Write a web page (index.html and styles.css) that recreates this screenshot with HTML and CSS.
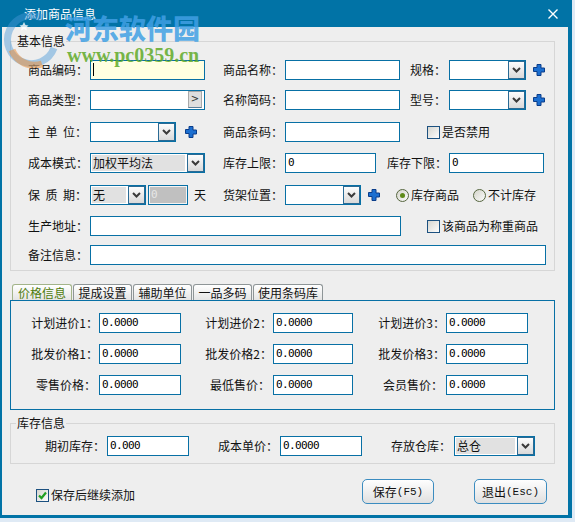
FILE: index.html
```html
<!DOCTYPE html>
<html lang="zh-CN">
<head>
<meta charset="utf-8">
<title>添加商品信息</title>
<link rel="stylesheet" href="styles.css">
</head>
<body>
<div class="win">
  <div class="titlebar">
    <span class="title">添加商品信息</span>
    <svg class="close" width="10" height="10" viewBox="0 0 10 10"><path d="M0.5 0.5L9.5 9.5M9.5 0.5L0.5 9.5" stroke="#fff" stroke-width="1.4"/></svg>
  </div>
  <div class="client">
    <div class="group basic">
      <span class="legend">基本信息</span>
      <div class="row">
        <span class="lbl">商品编码：</span>
        <span class="inp focus w115"><span class="caret"></span></span>
        <span class="lbl ml18">商品名称：</span>
        <span class="inp w115"></span>
        <span class="lbl lbl-s ml10">规格：</span>
        <span class="combo w77"><span class="cval"></span><span class="dd"><svg width="9" height="6" viewBox="0 0 9 6"><path d="M1 1l3.5 3.5L8 1" fill="none" stroke="#3a3a3a" stroke-width="2"/></svg></span></span>
        <svg class="plus ml7" width="12" height="12" viewBox="0 0 12 12"><path d="M4 .5h4v3.5h3.5v4H8v3.5H4V7.5H.5v-4H4z" fill="#1c6fd0" stroke="#0a3d8a"/></svg>
      </div>
      <div class="row mt10">
        <span class="lbl">商品类型：</span>
        <span class="inp w115 withbtn"><span class="mbtn">&gt;</span></span>
        <span class="lbl ml18">名称简码：</span>
        <span class="inp w115"></span>
        <span class="lbl lbl-s ml10">型号：</span>
        <span class="combo w77"><span class="cval"></span><span class="dd"><svg width="9" height="6" viewBox="0 0 9 6"><path d="M1 1l3.5 3.5L8 1" fill="none" stroke="#3a3a3a" stroke-width="2"/></svg></span></span>
        <svg class="plus ml7" width="12" height="12" viewBox="0 0 12 12"><path d="M4 .5h4v3.5h3.5v4H8v3.5H4V7.5H.5v-4H4z" fill="#1c6fd0" stroke="#0a3d8a"/></svg>
      </div>
      <div class="row mt12">
        <span class="lbl"><span class="sp">主单</span>位：</span>
        <span class="combo w86"><span class="cval"></span><span class="dd"><svg width="9" height="6" viewBox="0 0 9 6"><path d="M1 1l3.5 3.5L8 1" fill="none" stroke="#3a3a3a" stroke-width="2"/></svg></span></span>
        <svg class="plus ml9" width="12" height="12" viewBox="0 0 12 12"><path d="M4 .5h4v3.5h3.5v4H8v3.5H4V7.5H.5v-4H4z" fill="#1c6fd0" stroke="#0a3d8a"/></svg>
        <span class="lbl ml26">商品条码：</span>
        <span class="inp w115"></span>
        <span class="cb ml27"></span><span class="cbtxt">是否禁用</span>
      </div>
      <div class="row mt11">
        <span class="lbl">成本模式：</span>
        <span class="combo grey w115"><span class="cval">加权平均法</span><span class="dd"><svg width="9" height="6" viewBox="0 0 9 6"><path d="M1 1l3.5 3.5L8 1" fill="none" stroke="#3a3a3a" stroke-width="2"/></svg></span></span>
        <span class="lbl ml18">库存上限：</span>
        <span class="inp w91">0</span>
        <span class="lbl ml11">库存下限：</span>
        <span class="inp w95">0</span>
      </div>
      <div class="row mt12">
        <span class="lbl"><span class="sp">保质</span>期：</span>
        <span class="combo grey w56"><span class="cval">无</span><span class="dd"><svg width="9" height="6" viewBox="0 0 9 6"><path d="M1 1l3.5 3.5L8 1" fill="none" stroke="#3a3a3a" stroke-width="2"/></svg></span></span>
        <span class="inp dis w40 ml2">0</span>
        <span class="day">天</span>
        <span class="lbl ml17">货架位置：</span>
        <span class="combo w76"><span class="cval"></span><span class="dd"><svg width="9" height="6" viewBox="0 0 9 6"><path d="M1 1l3.5 3.5L8 1" fill="none" stroke="#3a3a3a" stroke-width="2"/></svg></span></span>
        <svg class="plus ml7" width="12" height="12" viewBox="0 0 12 12"><path d="M4 .5h4v3.5h3.5v4H8v3.5H4V7.5H.5v-4H4z" fill="#1c6fd0" stroke="#0a3d8a"/></svg>
        <span class="radio on ml16"></span><span class="rtxt">库存商品</span>
        <span class="radio ml14"></span><span class="rtxt">不计库存</span>
      </div>
      <div class="row mt11">
        <span class="lbl">生产地址：</span>
        <span class="inp w311"></span>
        <span class="cb ml26"></span><span class="cbtxt">该商品为称重商品</span>
      </div>
      <div class="row mt9">
        <span class="lbl">备注信息：</span>
        <span class="inp w456"></span>
      </div>
    </div>

    <div class="tabs">
      <span class="tab on t60">价格信息</span>
      <span class="tab t59">提成设置</span>
      <span class="tab t59">辅助单位</span>
      <span class="tab t59">一品多码</span>
      <span class="tab t70">使用条码库</span>
    </div>
    <div class="panel">
      <div class="prow">
        <span class="rl">计划进价1：</span><span class="inp">0.0000</span>
        <span class="rl">计划进价2：</span><span class="inp">0.0000</span>
        <span class="rl">计划进价3：</span><span class="inp">0.0000</span>
      </div>
      <div class="prow">
        <span class="rl">批发价格1：</span><span class="inp">0.0000</span>
        <span class="rl">批发价格2：</span><span class="inp">0.0000</span>
        <span class="rl">批发价格3：</span><span class="inp">0.0000</span>
      </div>
      <div class="prow">
        <span class="rl r3">零售价格：</span><span class="inp">0.0000</span>
        <span class="rl r3">最低售价：</span><span class="inp">0.0000</span>
        <span class="rl r3">会员售价：</span><span class="inp">0.0000</span>
      </div>
    </div>

    <div class="group stock">
      <span class="legend">库存信息</span>
      <div class="srow">
        <span class="rl p2">期初库存：</span><span class="inp">0.000</span>
        <span class="rl p2">成本单价：</span><span class="inp">0.0000</span>
        <span class="rl p3">存放仓库：</span>
        <span class="combo grey"><span class="cval">总仓</span><span class="dd"><svg width="9" height="6" viewBox="0 0 9 6"><path d="M1 1l3.5 3.5L8 1" fill="none" stroke="#3a3a3a" stroke-width="2"/></svg></span></span>
      </div>
    </div>

    <div class="bottom">
      <div class="keep">
        <span class="cb"><svg width="11" height="11" viewBox="0 0 11 11"><path d="M2 5.5l2.5 2.5L9 2.5" fill="none" stroke="#22a022" stroke-width="2.2"/></svg></span><span class="cbtxt">保存后继续添加</span>
      </div>
      <span class="btn b1">保存<span class="lat">(F5)</span></span>
      <span class="btn b2">退出<span class="lat">(Esc)</span></span>
    </div>
  </div>

  <div class="wm">
    <svg class="wm-logo" width="60" height="60" viewBox="0 0 60 60">
      <path d="M40 10A24 24 0 1 0 52 40" fill="none" stroke="rgba(70,150,215,0.45)" stroke-width="7"/>
      <path d="M10 42A24 24 0 0 0 40 56" fill="none" stroke="rgba(240,140,50,0.5)" stroke-width="7"/>
      <path d="M22 14l1.5 3 3 .4-2.2 2 .6 3-2.9-1.5-2.9 1.5.6-3-2.2-2 3-.4z" fill="rgba(255,255,255,0.8)"/>
    </svg>
    <span class="wm-cn">河东软件园</span>
    <span class="wm-url">www.pc0359.cn</span>
  </div>
</div>
</body>
</html>
```

FILE: styles.css
```css
*{box-sizing:border-box;margin:0;padding:0}
html,body{width:575px;height:522px;overflow:hidden}
body{background:#dfeaf5;font-family:"Noto Sans CJK SC","Noto Sans",sans-serif;font-size:12px;color:#111}

.win{position:relative;width:572px;height:518px;background:#eeeeee;border:solid #0173a6;border-width:0 4px 3px 2px;display:flex;flex-direction:column}
.titlebar{flex:none;height:27px;background:#0173a6;display:flex;align-items:center;padding-left:22px;color:#fff}
.title{font-size:12px;line-height:16px}
.close{margin-left:auto;margin-right:10px}

.client{flex:1;display:flex;flex-direction:column}

.group{position:relative;flex:none;margin-left:8px;width:545px;border:1px solid #d6d6d6}
.basic{margin-top:14px;height:230px;padding:18px 0 0 17px}
.legend{position:absolute;left:5px;top:-9px;padding:0 1px;background:#eeeeee;line-height:16px}

.row{display:flex;align-items:center;height:20px}
.mt9{margin-top:9px}.mt10{margin-top:10px}.mt11{margin-top:11px}.mt12{margin-top:12px}
.ml2{margin-left:2px}.ml7{margin-left:7px}.ml9{margin-left:9px}.ml10{margin-left:10px}.ml11{margin-left:11px}
.ml14{margin-left:14px}.ml16{margin-left:16px}.ml17{margin-left:17px}.ml18{margin-left:18px}.ml26{margin-left:26px}.ml27{margin-left:27px}
.w40{width:40px}.w56{width:56px}.w76{width:76px}.w77{width:77px}.w86{width:86px}.w91{width:91px}.w95{width:95px}.w115{width:115px}.w311{width:311px}.w456{width:456px}

.lbl{flex:none;width:62px;white-space:nowrap;line-height:16px}
.lbl-s{width:39px}
.sp{letter-spacing:5.5px}
.day{flex:none;margin-left:6px;width:12px;line-height:16px}

.inp{flex:none;display:block;height:20px;border:1px solid #0870a5;background:#fff;line-height:18px;padding-left:2px;font-family:"DejaVu Sans Mono",monospace;font-size:11px;letter-spacing:-0.6px;color:#000;white-space:nowrap;overflow:hidden}
.focus{background:#ffffe1}
.caret{display:block;width:1px;height:13px;background:#000;margin-top:2px}
.withbtn{display:flex;justify-content:flex-end;padding:0}
.mbtn{width:14px;height:17px;margin:0 2px 0 0;background:#dedede;border:1px solid #a9a9a9;border-bottom-color:#5d7f99;font-family:"DejaVu Sans",sans-serif;font-size:10px;line-height:14px;text-align:center;letter-spacing:0;color:#333}
.dis{background:#c0c0c0;box-shadow:inset 0 0 0 1px #f4f4f4;color:#e6e6e6}

.combo{flex:none;display:flex;height:20px;border:1px solid #0870a5;background:#fff}
.cval{flex:1;min-width:0;white-space:nowrap;overflow:hidden}
.grey .cval{background:#e1e1e1;margin:1px 2px 1px 1px;padding-left:1px;line-height:16px;color:#111}
.dd{flex:none;width:17px;border:1px solid #2a6a94;background:linear-gradient(#fdfdfd,#d9d9d9);display:flex;align-items:center;justify-content:center}

.plus{flex:none}

.cb{flex:none;width:13px;height:13px;border:1px solid #1c5180;background:linear-gradient(135deg,#d6d6d0,#fdfdfd);display:flex;align-items:center;justify-content:center}
.cbtxt{flex:none;margin-left:2px;line-height:16px;white-space:nowrap}
.radio{flex:none;width:13px;height:13px;border-radius:50%;border:1px solid #56663f;background:linear-gradient(135deg,#d4d4ca,#fbfbfb);display:flex;align-items:center;justify-content:center}
.radio.on::after{content:"";width:5px;height:5px;border-radius:50%;background:#5e8a18}
.rtxt{flex:none;margin-left:2px;line-height:16px}

.tabs{flex:none;display:flex;align-items:flex-end;margin:13px 0 0 10px;height:16px}
.tab{flex:none;height:16px;border:1px solid #8e9597;border-bottom:0;border-radius:3px 3px 0 0;background:linear-gradient(#ffffff,#e4e4e4);text-align:center;line-height:15px;margin-right:1px;white-space:nowrap}
.tab.on{color:#4f7c0c;border-color:#a3b48a}
.t60{width:60px}.t59{width:59px}.t70{width:70px}

.panel{flex:none;margin-left:8px;width:545px;height:110px;border:1px solid #0870a5;padding-top:12px}
.prow{display:grid;grid-template-columns:88px 82px 92px 80px 93px 82px;height:20px;align-items:center}
.prow+.prow{margin-top:11px}
.rl{text-align:right;padding-right:1px;white-space:nowrap;line-height:16px}
.r3{padding-right:3px}
.p2{padding-right:2px}.p3{padding-right:3px}

.stock{margin-top:13px;height:41px;padding-top:12px}
.srow{display:grid;grid-template-columns:96px 82px 91px 82px 92px 81px;align-items:center;height:20px}

.bottom{flex:none;display:flex;align-items:flex-start;height:25px;margin-top:15px;padding:0 21px 0 34px}
.keep{display:flex;align-items:center;margin-top:8px}
.btn{flex:none;height:25px;border:1px solid #3b8cc0;border-radius:5px;background:linear-gradient(#fefefe,#e0e0e0);display:flex;align-items:center;justify-content:center;white-space:nowrap}
.b1{margin-left:auto;width:72px}
.b2{margin-left:40px;width:73px}
.lat{font-family:"Liberation Mono",monospace;font-size:11px}

.wm{position:absolute;left:0;top:0;width:0;height:0;pointer-events:none}
.wm-logo{position:absolute;left:0;top:8px}
.wm-cn{position:absolute;left:63px;top:14px;font-size:27px;line-height:27px;font-weight:900;color:rgba(64,160,228,0.85);white-space:nowrap}
.wm-url{position:absolute;left:65px;top:45px;font-family:"Liberation Serif",serif;font-weight:bold;font-size:20px;line-height:20px;color:rgba(96,170,40,0.85);white-space:nowrap}
```
